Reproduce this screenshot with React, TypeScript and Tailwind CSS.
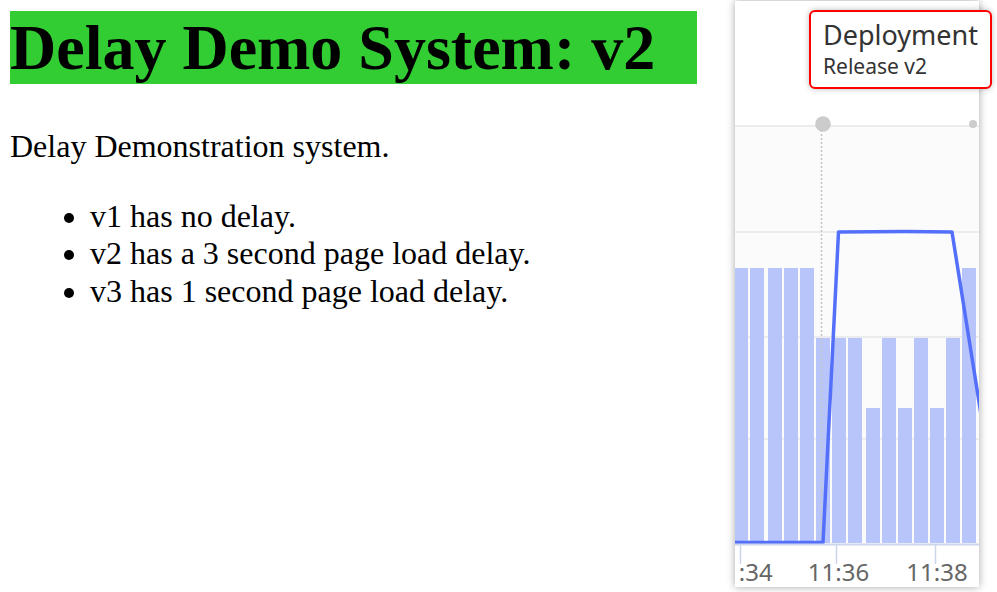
import React from "react";

const bars: [number, number, number][] = [
  [733, 748, 267],
  [750, 764, 267],
  [768, 782, 267],
  [784, 798, 267],
  [800, 814, 267],
  [816, 830, 337],
  [832, 846, 337],
  [848, 862, 337],
  [866, 880, 407],
  [882, 896, 337],
  [898, 912, 407],
  [914, 928, 337],
  [930, 944, 407],
  [946, 960, 337],
  [962, 976, 267],
];

function Chart() {
  return (
    <svg width={244} height={586} viewBox="0 0 244 586" className="block">
      <g transform="translate(-735,0)">
        <rect x={735} y={125} width={250} height={418} fill="#fbfbfb" />
        {[125, 231, 336, 438].map((y) => (
          <line key={y} x1={735} x2={985} y1={y} y2={y} stroke="#ececec" strokeWidth={2} />
        ))}
        {bars.map(([a, b, t], i) => (
          <rect key={i} x={a} y={t} width={b - a} height={542 - t} fill="#b8c5fb" />
        ))}
        <line x1={821.5} x2={821.5} y1={125} y2={543} stroke="#c4c4c4" strokeWidth={1.5} strokeDasharray="2 2" />
        <circle cx={823} cy={123} r={7.8} fill="#cccccc" />
        <circle cx={973} cy={123} r={4} fill="#cccccc" />
        <polyline
          points="735,541.5 823,541.5 838.5,231 905,230.5 952,231 986,445"
          fill="none"
          stroke="#5470fb"
          strokeWidth={3.5}
          strokeLinejoin="round"
        />
        <line x1={735} x2={985} y1={543.5} y2={543.5} stroke="#ccd6eb" strokeWidth={2} />
        {[740.5, 836.5, 935.5].map((x) => (
          <line key={x} x1={x} x2={x} y1={543} y2={563} stroke="#ccd6eb" strokeWidth={1.5} />
        ))}
        {[
          [742, "11:34"],
          [838.5, "11:36"],
          [937, "11:38"],
        ].map(([x, t]) => (
          <text
            key={t as string}
            x={x as number}
            y={580}
            textAnchor="middle"
            fill="#666666"
            fontSize={24}
            fontFamily="'Noto Sans', sans-serif"
          >
            {t}
          </text>
        ))}
      </g>
    </svg>
  );
}

export default function App() {
  return (
    <div className="relative w-[997px] h-[592px] overflow-hidden bg-white">
      <div
        className="pl-[10px] pt-[11px] text-black"
        style={{ fontFamily: "'Liberation Serif', 'Times New Roman', serif" }}
      >
        <h1 className="w-[687px] h-[73px] bg-[#32cd32] text-[64px] leading-[73px] font-bold m-0">
          Delay Demo System: v2
        </h1>
        <p className="mt-[44px] text-[32px] leading-[37.5px]">Delay Demonstration system.</p>
        <ul className="mt-[32px] list-disc pl-[80px] text-[32px] leading-[37.5px]">
          <li>v1 has no delay.</li>
          <li>v2 has a 3 second page load delay.</li>
          <li>v3 has 1 second page load delay.</li>
        </ul>
      </div>

      <div className="absolute left-[735px] top-[1px] w-[244px] h-[586px] bg-white overflow-hidden shadow-[0_0_8px_rgba(0,0,0,0.35)]">
        <Chart />
      </div>

      <div
        className="absolute left-[809px] top-[10px] w-[183px] h-[79px] rounded-[6px] border-2 border-[#ff0000] bg-white pl-[12px] pt-[5px] shadow-[0_0_6px_rgba(0,0,0,0.25)]"
        style={{ fontFamily: "'Noto Sans', sans-serif" }}
      >
        <div className="text-[27px] leading-[36px] text-[#333333] whitespace-nowrap">Deployment</div>
        <div className="text-[21px] leading-[26px] text-[#333333] whitespace-nowrap">Release v2</div>
      </div>
    </div>
  );
}
